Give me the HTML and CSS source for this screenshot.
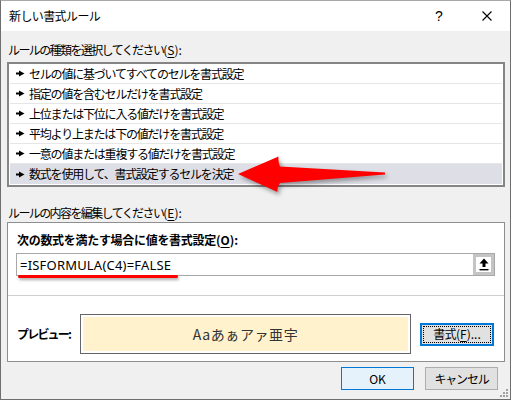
FILE: index.html
```html
<!DOCTYPE html>
<html lang="ja">
<head>
<meta charset="utf-8">
<title>新しい書式ルール</title>
<link rel="stylesheet" href="styles.css">
</head>
<body>
<div class="window">
  <div class="titlebar">
    <div class="title">新しい書式ルール</div>
    <div class="cap-btn help">?</div>
    <div class="cap-btn close">
      <svg width="10" height="10" viewBox="0 0 10 10"><path d="M0.5 0.5L9.5 9.5M9.5 0.5L0.5 9.5" stroke="#000" stroke-width="1.1" fill="none"/></svg>
    </div>
  </div>
  <div class="content">
    <div class="label">ルールの種類を選択してください<span class="lat">(<u>S</u>):</span></div>
    <div class="listbox">
      <div class="row"><svg class="pt" width="9" height="7" viewBox="0 0 9 7"><rect x="0" y="2.5" width="4" height="2" fill="#000"/><path d="M3 0.5L8.5 3.5L3 6.5Z" fill="#000"/></svg><span>セルの値に基づいてすべてのセルを書式設定</span></div>
      <div class="row"><svg class="pt" width="9" height="7" viewBox="0 0 9 7"><rect x="0" y="2.5" width="4" height="2" fill="#000"/><path d="M3 0.5L8.5 3.5L3 6.5Z" fill="#000"/></svg><span>指定の値を含むセルだけを書式設定</span></div>
      <div class="row"><svg class="pt" width="9" height="7" viewBox="0 0 9 7"><rect x="0" y="2.5" width="4" height="2" fill="#000"/><path d="M3 0.5L8.5 3.5L3 6.5Z" fill="#000"/></svg><span>上位または下位に入る値だけを書式設定</span></div>
      <div class="row"><svg class="pt" width="9" height="7" viewBox="0 0 9 7"><rect x="0" y="2.5" width="4" height="2" fill="#000"/><path d="M3 0.5L8.5 3.5L3 6.5Z" fill="#000"/></svg><span>平均より上または下の値だけを書式設定</span></div>
      <div class="row"><svg class="pt" width="9" height="7" viewBox="0 0 9 7"><rect x="0" y="2.5" width="4" height="2" fill="#000"/><path d="M3 0.5L8.5 3.5L3 6.5Z" fill="#000"/></svg><span>一意の値または重複する値だけを書式設定</span></div>
      <div class="row selected"><svg class="pt" width="9" height="7" viewBox="0 0 9 7"><rect x="0" y="2.5" width="4" height="2" fill="#000"/><path d="M3 0.5L8.5 3.5L3 6.5Z" fill="#000"/></svg><span>数式を使用して、書式設定するセルを決定</span></div>
    </div>
    <div class="label label2">ルールの内容を編集してください<span class="lat">(<u>E</u>):</span></div>
    <div class="group">
      <div class="formula-section">
        <div class="bold-label">次の数式を満たす場合に値を書式設定<span class="lat">(<u>O</u>):</span></div>
        <div class="input">
          <span class="input-text">=ISFORMULA(C4)=FALSE</span>
          <div class="collapse-btn">
            <svg width="10" height="13" viewBox="0 0 10 13"><path d="M5 0.5L9.5 5.5H6.5V9H3.5V5.5H0.5Z" fill="#000"/><rect x="0.5" y="11" width="9" height="1.4" fill="#000"/></svg>
          </div>
        </div>
      </div>
      <div class="sep"></div>
      <div class="preview-row">
        <div class="bold-label preview-label">プレビュー<span class="lat">:</span></div>
        <div class="preview-box"><div class="preview-inner">Aaあぁアァ亜宇</div></div>
        <div class="btn fmt-btn"><div class="focus">書式<span class="lat">(<u>F</u>)...</span></div></div>
      </div>
    </div>
    <div class="footer">
      <div class="btn ok">OK</div>
      <div class="btn cancel">キャンセル</div>
    </div>
  </div>
  <div class="red-line"></div>
  <svg class="red-arrow" width="160" height="48" viewBox="230 150 160 48"><path d="M238 174L278.5 156.5Q278 162 280 166.5L385 172.6L385 174.6L280 183Q277 187 277.5 192Z" fill="#ff0000"/></svg>
  <svg class="grip" width="8" height="8" viewBox="0 0 8 8"><g fill="#a0a0a0"><rect x="6" y="0" width="2" height="2"/><rect x="3" y="3" width="2" height="2"/><rect x="6" y="3" width="2" height="2"/><rect x="0" y="6" width="2" height="2"/><rect x="3" y="6" width="2" height="2"/><rect x="6" y="6" width="2" height="2"/></g></svg>
</div>
</body>
</html>
```

FILE: styles.css
```css
html, body {
  margin: 0;
  padding: 0;
}
body {
  width: 512px;
  height: 400px;
  overflow: hidden;
  background: #ffffff;
  font-family: "Noto Sans CJK JP", "Noto Sans", sans-serif;
  font-size: 12px;
  letter-spacing: -1.6px;
  color: #000;
}
u {
  text-decoration: underline;
  text-underline-offset: 2px;
}
.lat {
  letter-spacing: 0;
}
.window {
  position: relative;
  width: 511px;
  height: 400px;
  box-sizing: border-box;
  border: 1px solid #6e6e6e;
  border-top-color: #a8a8a8;
  background: #f0f0f0;
  display: flex;
  flex-direction: column;
}
.titlebar {
  height: 30px;
  background: #fff;
  display: flex;
  align-items: center;
}
.title {
  flex: 1;
  padding-left: 8px;
  line-height: 16px;
  font-size: 12px;
  letter-spacing: -0.6px;
}
.cap-btn {
  width: 46px;
  height: 30px;
  display: flex;
  align-items: center;
  justify-content: center;
}
.help {
  font-family: "Liberation Sans", sans-serif;
  font-size: 14px;
  letter-spacing: 0;
  margin-right: 2px;
}
.content {
  flex: 1;
  padding: 11px 5px 0 6px;
  display: flex;
  flex-direction: column;
}
.label {
  line-height: 16px;
  height: 16px;
  padding-left: 1px;
}
.listbox {
  margin-top: 4px;
  width: 498px;
  height: 125px;
  box-sizing: border-box;
  border: 2px solid #858585;
  background: #fff;
  padding: 0 1px 1px 1px;
}
.row {
  height: 20px;
  box-sizing: border-box;
  border-bottom: 1px solid #e6e6e6;
  display: flex;
  align-items: center;
  padding-left: 6px;
  line-height: 16px;
  letter-spacing: -1.2px;
}
.row.selected {
  border-bottom: none;
  height: 20px;
  background: #dedee6;
}
.pt {
  margin-right: 4px;
  flex: none;
}
.label2 {
  margin-top: 18px;
}
.group {
  margin-top: 1px;
  width: 498px;
  height: 140px;
  box-sizing: border-box;
  border: 1px solid #8e8e8e;
  background: #fff;
  display: flex;
  flex-direction: column;
}
.formula-section {
  padding: 9px 9px 0 8px;
}
.bold-label {
  font-weight: bold;
  line-height: 16px;
  padding-left: 1px;
  letter-spacing: -0.3px;
}
.input {
  margin-top: 5px;
  height: 23px;
  box-sizing: border-box;
  border: 1px solid #a8a8a8;
  display: flex;
  align-items: center;
  justify-content: space-between;
  padding-left: 3px;
}
.input-text {
  font-family: "Noto Sans", sans-serif;
  font-size: 13px;
  letter-spacing: 0.2px;
}
.collapse-btn {
  width: 21px;
  height: 21px;
  box-sizing: border-box;
  border: 3px solid #c4c4c4;
  background: #fff;
  display: flex;
  align-items: center;
  justify-content: center;
}
.sep {
  margin-top: 19px;
  height: 1px;
  background: #cfcfcf;
}
.preview-row {
  margin-top: 18px;
  padding-left: 8px;
  display: flex;
  align-items: center;
}
.preview-label {
  width: 63px;
  flex: none;
  letter-spacing: -1.8px;
}
.preview-box {
  width: 331px;
  height: 40px;
  box-sizing: border-box;
  border: 1px solid #666;
  padding: 2px;
  background: #fff;
}
.preview-inner {
  height: 100%;
  background: #fff2cc;
  display: flex;
  align-items: center;
  justify-content: center;
  font-size: 14px;
  letter-spacing: 0.6px;
  color: #333;
}
.btn {
  height: 23px;
  box-sizing: border-box;
  display: flex;
  align-items: center;
  justify-content: center;
  line-height: 16px;
}
.fmt-btn {
  margin-left: 9px;
  width: 74px;
  border: 2px solid #0078d7;
  background: #e1e1e1;
  padding: 1px;
  letter-spacing: -0.6px;
}
.focus {
  width: 100%;
  height: 100%;
  box-sizing: border-box;
  border: 1px dotted #000;
  display: flex;
  align-items: center;
  justify-content: center;
}
.footer {
  margin-top: 5px;
  padding-right: 7px;
  display: flex;
  justify-content: flex-end;
  gap: 11px;
}
.ok, .cancel {
  width: 73px;
}
.ok {
  background: #e5f1fb;
  border: 1px solid #0078d7;
  letter-spacing: 0;
}
.cancel {
  background: #e1e1e1;
  border: 1px solid #adadad;
  letter-spacing: -1.2px;
}
.red-line {
  position: absolute;
  left: 17px;
  top: 274px;
  width: 160px;
  height: 3px;
  border-radius: 2px;
  background: #ff0000;
  box-shadow: 1px 2px 3px rgba(0, 0, 0, 0.35);
}
.red-arrow {
  position: absolute;
  left: 229px;
  top: 149px;
  filter: drop-shadow(2px 3px 2px rgba(0, 0, 0, 0.35));
  overflow: visible;
}
.grip {
  position: absolute;
  right: 2px;
  bottom: 2px;
}
```
